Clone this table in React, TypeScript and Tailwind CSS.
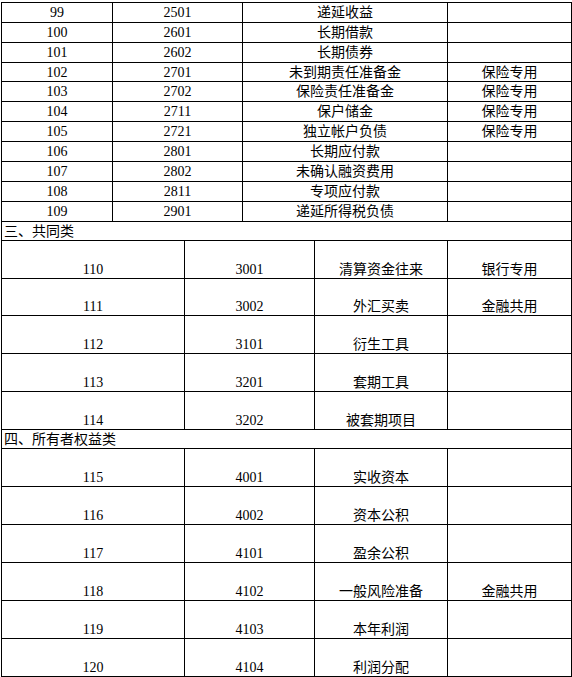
import React from "react";

type Row = { kind: "top" | "low" | "sec"; a?: string; b?: string; c?: string; d?: string; h: string };

const rows: Row[] = [
  { kind: "top", a: "99", b: "2501", c: "递延收益", d: "", h: "h-[20px]" },
  { kind: "top", a: "100", b: "2601", c: "长期借款", d: "", h: "h-[20px]" },
  { kind: "top", a: "101", b: "2602", c: "长期债券", d: "", h: "h-[20px]" },
  { kind: "top", a: "102", b: "2701", c: "未到期责任准备金", d: "保险专用", h: "h-[19px]" },
  { kind: "top", a: "103", b: "2702", c: "保险责任准备金", d: "保险专用", h: "h-[20px]" },
  { kind: "top", a: "104", b: "2711", c: "保户储金", d: "保险专用", h: "h-[20px]" },
  { kind: "top", a: "105", b: "2721", c: "独立帐户负债", d: "保险专用", h: "h-[20px]" },
  { kind: "top", a: "106", b: "2801", c: "长期应付款", d: "", h: "h-[20px]" },
  { kind: "top", a: "107", b: "2802", c: "未确认融资费用", d: "", h: "h-[20px]" },
  { kind: "top", a: "108", b: "2811", c: "专项应付款", d: "", h: "h-[20px]" },
  { kind: "top", a: "109", b: "2901", c: "递延所得税负债", d: "", h: "h-[20px]" },
  { kind: "sec", a: "三、共同类", h: "h-[19px]" },
  { kind: "low", a: "110", b: "3001", c: "清算资金往来", d: "银行专用", h: "h-[38px]" },
  { kind: "low", a: "111", b: "3002", c: "外汇买卖", d: "金融共用", h: "h-[37px]" },
  { kind: "low", a: "112", b: "3101", c: "衍生工具", d: "", h: "h-[38px]" },
  { kind: "low", a: "113", b: "3201", c: "套期工具", d: "", h: "h-[38px]" },
  { kind: "low", a: "114", b: "3202", c: "被套期项目", d: "", h: "h-[38px]" },
  { kind: "sec", a: "四、所有者权益类", h: "h-[19px]" },
  { kind: "low", a: "115", b: "4001", c: "实收资本", d: "", h: "h-[38px]" },
  { kind: "low", a: "116", b: "4002", c: "资本公积", d: "", h: "h-[38px]" },
  { kind: "low", a: "117", b: "4101", c: "盈余公积", d: "", h: "h-[38px]" },
  { kind: "low", a: "118", b: "4102", c: "一般风险准备", d: "金融共用", h: "h-[38px]" },
  { kind: "low", a: "119", b: "4103", c: "本年利润", d: "", h: "h-[38px]" },
  { kind: "low", a: "120", b: "4104", c: "利润分配", d: "", h: "h-[38px]" },
];

const topCols = ["w-[111px]", "w-[130px]", "w-[205px]", "w-[124px]"];
const lowCols = ["w-[183px]", "w-[130px]", "w-[133px]", "w-[124px]"];

export default function App() {
  return (
    <div className="h-[677px] w-[572px] overflow-hidden bg-white text-[14px] text-black font-['Liberation_Serif','Noto_Sans_CJK_SC',serif]">
      <div className="ml-[1px] mt-[2px] w-[571px] border-l border-t border-black">
        {rows.map((r, i) => {
          if (r.kind === "sec") {
            return (
              <div
                key={i}
                className={`${r.h} flex items-end border-b border-r border-black pl-[2px] leading-[16px]`}
              >
                {r.a}
              </div>
            );
          }
          const top = r.kind === "top";
          const cols = top ? topCols : lowCols;
          const vals = [r.a, r.b, r.c, r.d];
          return (
            <div key={i} className={`${r.h} flex border-b border-black`}>
              {vals.map((v, j) => (
                <div
                  key={j}
                  className={`${cols[j]} flex shrink-0 justify-center whitespace-nowrap border-r border-black ${
                    top ? "items-center leading-[19px]" : "items-end leading-[16px]"
                  }`}
                >
                  {v}
                </div>
              ))}
            </div>
          );
        })}
      </div>
    </div>
  );
}
